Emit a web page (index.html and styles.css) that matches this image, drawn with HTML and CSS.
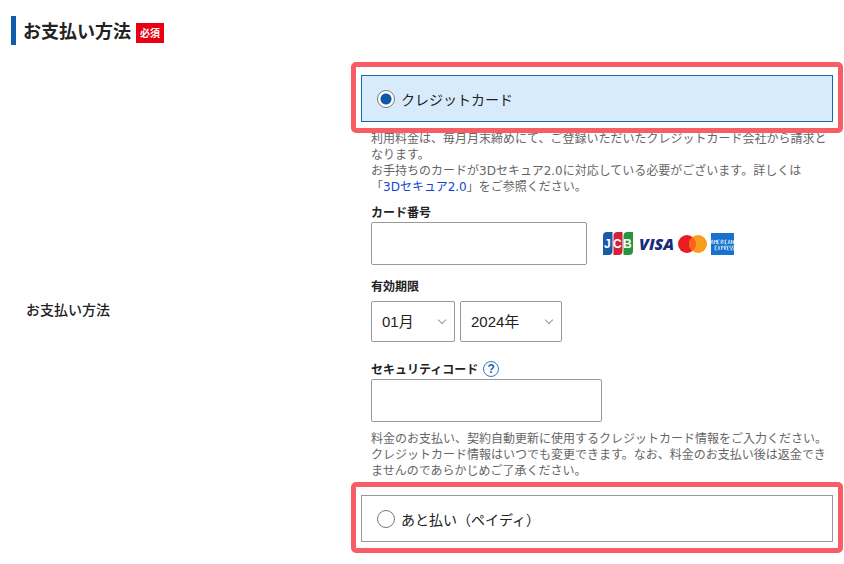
FILE: index.html
```html
<!DOCTYPE html>
<html lang="ja">

<head>
  <meta charset="UTF-8">
  <title>お支払い方法</title>
  <meta name="viewport" content="width=device-width, initial-scale=1.0">
  <link rel="stylesheet" href="styles.css">
</head>

<body>
<form class="payment">
  <h2 class="title">お支払い方法 <span class="required">必須</span></h2>

  <div class="row">
    <div class="row-name" id="payName">お支払い方法</div>

    <div class="row-body" role="radiogroup" aria-labelledby="payName">
      <!-- クレジットカード -->
      <label class="option selected">
        <input type="radio" name="pay" value="card" checked>
        クレジットカード
      </label>

      <div class="card-form">
        <p class="note">利用料金は、毎月月末締めにて、ご登録いただいたクレジットカード会社から請求となります。<br>
          お手持ちのカードが3Dセキュア2.0に対応している必要がございます。詳しくは<br>
          「<a href="#">3Dセキュア2.0</a>」をご参照ください。</p>

        <div class="field">
          <label for="cardNumber">カード番号</label>
          <div class="field-row">
            <input type="text" id="cardNumber" class="card-number">
            <svg class="brands" width="132" height="24" viewBox="0 0 132 24" role="img" aria-label="JCB VISA Mastercard American Express">
              <!-- JCB -->
              <path d="M4 0H9.500V19Q9.500 23 5.500 23H0V4Q0 0 4 0Z" fill="#1d5aa5"/>
              <path d="M14.500 0H19.500V19Q19.500 23 15.500 23H10.500V4Q10.500 0 14.500 0Z" fill="#d5203a"/>
              <path d="M24.500 0H30V19Q30 23 26 23H20.500V4Q20.500 0 24.500 0Z" fill="#25963c"/>
              <text x="1" y="16" class="jcb">J</text>
              <text x="10" y="16" class="jcb">C</text>
              <text x="20" y="16" class="jcb">B</text>
              <!-- VISA -->
              <text x="36" y="18" class="visa">VISA</text>
              <!-- Mastercard -->
              <circle cx="84" cy="12" r="9" fill="#eb1b24"/>
              <circle cx="95" cy="12" r="9" fill="#f89e1c"/>
              <path d="M89.500 4.900A9 9 0 0 1 89.500 19.100A9 9 0 0 1 89.500 4.900Z" fill="#f7631c"/>
              <!-- American Express -->
              <rect x="108" y="1" width="23" height="22" fill="#1672ce"/>
              <path d="M108 12l1-4h.500l1 4M108.500 11h1.500M111.500 12V8l1 2 1-2v4M116.500 8h-2v4h2M114.500 10h1.500M118 12V8h1.500v2h-1l1 2M121 8v4M124 8h-1.500v4h1.500M125 12l1-4h.500l1 4M125.500 11h1.500M128.500 12V8l2 4V8" class="amex"/>
              <path d="M114 14h-2v4h2M112 16h1.500M115 14l2 4M117 14l-2 4M118.500 18v-4h1.500v2h-1.500M121.500 18v-4h1.500v2h-1l1 2M126 14h-1.500v4h1.500M124.500 16h1M128.500 14h-1.500v2h1.500v2h-1.500M131 14h-1.500v2h1.500v2h-1.500" class="amex"/>
            </svg>
          </div>
        </div>

        <div class="field expiry">
          <label for="month">有効期限</label>
          <div class="field-row">
            <div class="select month">
              <select id="month">
                <option>01月</option>
                <option>02月</option>
                <option>03月</option>
              </select>
            </div>
            <div class="select year">
              <select id="year" aria-label="年">
                <option>2024年</option>
                <option>2025年</option>
                <option>2026年</option>
              </select>
            </div>
          </div>
        </div>

        <div class="field security">
          <div class="label-row">
            <label for="code">セキュリティコード</label>
            <button type="button" class="help">?</button>
          </div>
          <input type="text" id="code" class="code">
        </div>

        <p class="note">料金のお支払い、契約自動更新に使用するクレジットカード情報をご入力ください。<br>
          クレジットカード情報はいつでも変更できます。なお、料金のお支払い後は返金できませんのであらかじめご了承ください。</p>
      </div>

      <!-- ペイディ -->
      <label class="option">
        <input type="radio" name="pay" value="paidy">
        あと払い（ペイディ）
      </label>
    </div>
  </div>
</form>
</body>
</html>
```
FILE: styles.css
```css
body {
  margin: 0;
  padding: 16px 11px 20px;
  background-color: #fff;
  color: #222;
  font-family: "DejaVu Sans", "Noto Sans CJK JP", sans-serif;
  font-size: 12px;
}

input, select, button {
  box-sizing: border-box;
  margin: 0;
  font-family: "Liberation Sans", "Noto Sans CJK JP", sans-serif;
}

.title {
  display: flex;
  align-items: center;
  gap: 5px;
  margin: 0 0 30px;
  padding-left: 7px;
  border-left: 5px solid #0f5cab;
  font-family: "Noto Sans CJK JP", sans-serif;
  font-size: 18px;
  font-weight: bold;
  line-height: 29px;
}

.required {
  margin-top: 5px;
  padding: 0 4px;
  background-color: #e60012;
  color: #fff;
  font-size: 10px;
  font-weight: bold;
  line-height: 20px;
}

.row {
  display: grid;
  grid-template-columns: 350px 1fr;
  align-items: center;
}

.row-name {
  padding-left: 15px;
  font-family: "Noto Sans CJK JP", sans-serif;
  font-size: 14px;
  font-weight: 500;
}

.option {
  position: relative;
  display: flex;
  align-items: center;
  gap: 6px;
  box-sizing: border-box;
  height: 47px;
  padding: 0 15px;
  border: 1px solid #999;
  font-family: "Noto Sans CJK JP", sans-serif;
  font-size: 14px;
}

.option.selected {
  border-color: #1768b5;
  background-color: #d8ebfc;
}

/* 赤枠 */
.option::after {
  content: "";
  position: absolute;
  inset: -14px -11px -12px;
  border: 5px solid #f85d66;
  border-radius: 5px;
  pointer-events: none;
}

.option input {
  appearance: none;
  width: 18px;
  height: 18px;
  border: 1px solid #777;
  border-radius: 50%;
  background-color: #fff;
}

.option input:checked {
  background-image: radial-gradient(circle, #0d59a8 5px, transparent 6px);
}

.card-form {
  padding: 9px 0 16px 10px;
}

.note {
  margin: 0;
  color: #666;
  line-height: 16px;
}

.note a {
  color: #1446d2;
  text-decoration: none;
}

.field {
  margin-top: 7px;
}

.field label {
  display: block;
  font-family: "Noto Sans CJK JP", sans-serif;
  font-weight: bold;
  line-height: 20px;
}

.field input {
  height: 43px;
  padding: 0 10px;
  border: 1px solid #999;
  border-radius: 2px;
  font-size: 15px;
}

.field-row {
  display: flex;
  align-items: center;
  gap: 5px;
}

.card-number {
  width: 216px;
}

.code {
  display: block;
  width: 231px;
}

.brands {
  margin-left: 11px;
}

.jcb {
  fill: #fff;
  font-family: "Liberation Sans", sans-serif;
  font-size: 12px;
  font-weight: bold;
}

.visa {
  fill: #1b2c7c;
  font-family: "Open Sans", sans-serif;
  font-size: 16px;
  font-style: italic;
  font-weight: 800;
}

.amex {
  fill: none;
  stroke: #fff;
  stroke-width: 0.6;
}

.expiry {
  margin-top: 11px;
}

.expiry label {
  margin-bottom: 5px;
}

.select {
  position: relative;
}

.select select {
  appearance: none;
  width: 100%;
  height: 41px;
  padding: 0 10px;
  border: 1px solid #999;
  border-radius: 2px;
  background-color: #fff;
  color: #222;
  font-size: 15px;
}

.select::after {
  content: "";
  position: absolute;
  top: 16px;
  right: 10px;
  width: 5px;
  height: 5px;
  border-right: 1px solid #999;
  border-bottom: 1px solid #999;
  transform: rotate(45deg);
  pointer-events: none;
}

.month {
  width: 84px;
}

.year {
  width: 102px;
}

.security {
  margin: 17px 0 9px;
}

.label-row {
  display: flex;
  align-items: center;
  gap: 5px;
}

.help {
  width: 16px;
  height: 16px;
  padding: 0;
  border: 1px solid #2f78bd;
  border-radius: 50%;
  background-color: #fff;
  color: #1763b0;
  font-size: 12px;
  font-weight: bold;
  line-height: 14px;
}
```
